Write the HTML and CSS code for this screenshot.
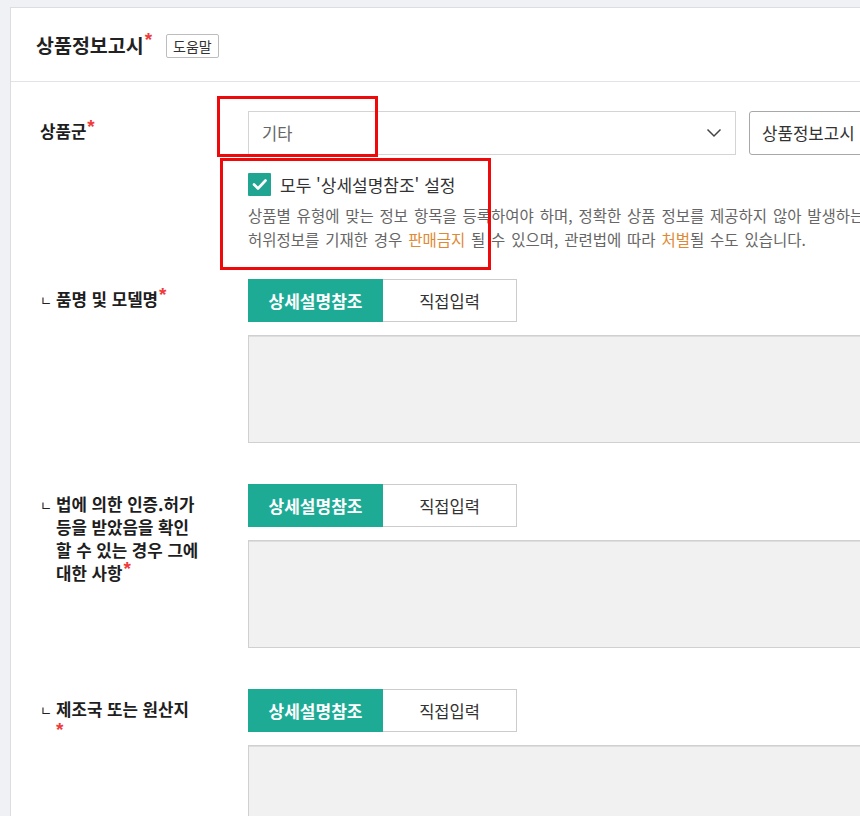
FILE: index.html
```html
<!DOCTYPE html>
<html lang="ko">
<head>
<meta charset="utf-8">
<title>상품정보고시</title>
<link rel="stylesheet" href="styles.css">
</head>
<body>
<div class="card">
  <div class="card-head">
    <h2 class="title">상품정보고시<span class="req">*</span></h2>
    <span class="help">도움말</span>
  </div>
  <div class="card-body">
    <div class="row">
      <div class="label"><span class="ltext">상품군<span class="req">*</span></span></div>
      <div class="field">
        <div class="selects">
          <div class="select">
            <span>기타</span>
            <svg class="chev" width="16" height="10" viewBox="0 0 16 10"><polyline points="1.5,1.5 8,8 14.5,1.5" fill="none" stroke="#444" stroke-width="1.5"/></svg>
          </div>
          <div class="select select2"><span>상품정보고시</span></div>
        </div>
        <div class="check-row">
          <span class="checkbox"><svg width="23" height="23" viewBox="0 0 23 23"><polyline points="6,11.5 10,15.5 17.5,7.5" fill="none" stroke="#fff" stroke-width="2.6" stroke-linecap="round" stroke-linejoin="round"/></svg></span>
          <span class="check-label">모두 '상세설명참조' 설정</span>
        </div>
        <p class="desc">상품별 유형에 맞는 정보 항목을 등록하여야 하며, 정확한 상품 정보를 제공하지 않아 발생하는 불이익에 대해서는 판매자에게 책임이 있습니다.<br>허위정보를 기재한 경우 <span class="warn">판매금지</span> 될 수 있으며, 관련법에 따라 <span class="warn">처벌</span>될 수도 있습니다.</p>
      </div>
    </div>

    <div class="row row-sub">
      <div class="label"><span class="lmark">ㄴ</span><span class="ltext">품명 및 모델명<span class="req">*</span></span></div>
      <div class="field">
        <div class="seg"><span class="btn on">상세설명참조</span><span class="btn off">직접입력</span></div>
        <div class="area"></div>
      </div>
    </div>

    <div class="row row-sub">
      <div class="label"><span class="lmark">ㄴ</span><span class="ltext">법에 의한 인증.허가<br>등을 받았음을 확인<br>할 수 있는 경우 그에<br>대한 사항<span class="req">*</span></span></div>
      <div class="field">
        <div class="seg"><span class="btn on">상세설명참조</span><span class="btn off">직접입력</span></div>
        <div class="area"></div>
      </div>
    </div>

    <div class="row row-sub">
      <div class="label"><span class="lmark">ㄴ</span><span class="ltext">제조국 또는 원산지<span class="req req-block">*</span></span></div>
      <div class="field">
        <div class="seg"><span class="btn on">상세설명참조</span><span class="btn off">직접입력</span></div>
        <div class="area"></div>
      </div>
    </div>
  </div>

  <div class="mark mark-1"></div>
  <div class="mark mark-2"></div>
</div>
</body>
</html>
```

FILE: styles.css
```css
html, body {
  margin: 0;
  padding: 0;
}
body {
  background: #f0f1f5;
  overflow: hidden;
  font-family: "Noto Sans CJK KR", "Noto Sans", sans-serif;
  color: #222;
}
.card {
  position: relative;
  margin: 7px 0 0 10px;
  width: 1000px;
  min-height: 900px;
  background: #fff;
  border: 1px solid #dcdde1;
  border-right: none;
}
.card-head {
  height: 73px;
  display: flex;
  align-items: center;
  padding-left: 25px;
  border-bottom: 1px solid #e2e3e6;
}
.title {
  margin: 0;
  font-size: 19.5px;
  font-weight: 700;
  color: #222;
  line-height: 24px;
}
.req {
  color: #ee3b3b;
  font-family: "Liberation Sans", sans-serif;
  font-weight: 700;
  font-size: 19px;
  line-height: 1;
  vertical-align: top;
  margin-left: 1px;
  position: relative;
  top: -3px;
}
.help {
  margin-left: 14px;
  margin-top: 2px;
  height: 24px;
  box-sizing: border-box;
  padding: 0 6px;
  border: 1px solid #bdbdbd;
  border-radius: 2px;
  font-size: 14px;
  line-height: 22px;
  color: #333;
}
.card-body {
  padding-top: 29px;
}
.row {
  display: grid;
  grid-template-columns: 237px 1fr;
}
.row + .row {
  margin-top: 28px;
}
.row-sub + .row-sub {
  margin-top: 41px;
}
.label {
  display: flex;
  padding: 9px 0 0 29px;
  font-size: 16.8px;
  font-weight: 700;
  line-height: 23px;
  color: #1e1e1e;
}
.lmark {
  width: 16px;
  flex: none;
  font-size: 13px;
  font-weight: 400;
  color: #222;
}
.ltext {
  display: block;
}
.req-block {
  display: block;
  top: -1px;
  height: 12px;
  margin-left: 0;
}
.selects {
  display: flex;
  gap: 13px;
}
.select {
  width: 488px;
  height: 44px;
  box-sizing: border-box;
  border: 1px solid #d4d4d4;
  display: flex;
  align-items: center;
  justify-content: space-between;
  padding: 0 13px 0 13px;
  font-size: 16.5px;
  color: #666;
}
.select2 {
  width: 220px;
  border-color: #a8a8a8;
  border-radius: 3px;
  padding-left: 12px;
  font-size: 16.8px;
  color: #333;
}
.check-row {
  display: flex;
  align-items: center;
  gap: 9px;
  margin-top: 18px;
  height: 23px;
}
.checkbox {
  width: 23px;
  height: 23px;
  background: #20a592;
  border-radius: 1px;
  display: block;
}
.checkbox svg {
  display: block;
}
.check-label {
  font-size: 17px;
  color: #333;
}
.desc {
  margin: 7px 0 0;
  font-size: 15.5px;
  word-spacing: 1.5px;
  line-height: 24px;
  color: #666;
  white-space: nowrap;
}
.warn {
  color: #de8a35;
}
.seg {
  display: flex;
}
.btn {
  height: 43px;
  box-sizing: border-box;
  display: flex;
  align-items: center;
  justify-content: center;
  font-size: 17px;
}
.btn.on {
  width: 135px;
  background: #1eab96;
  border: 1px solid #1eab96;
  color: #fff;
  font-weight: 700;
}
.btn.off {
  width: 134px;
  background: #fff;
  border: 1px solid #cccccc;
  border-left: none;
  color: #333;
  font-size: 16.5px;
}
.area {
  margin-top: 13px;
  width: 700px;
  height: 108px;
  box-sizing: border-box;
  background: #f1f1f1;
  border: 1px solid #d0d0d0;
  box-shadow: inset 0 1px 0 #dedede;
}
.mark {
  position: absolute;
  box-sizing: border-box;
  border: 3px solid #ee0a0a;
}
.mark-1 {
  left: 206px;
  top: 88px;
  width: 161px;
  height: 61px;
}
.mark-2 {
  left: 209px;
  top: 150px;
  width: 271px;
  height: 112px;
}
```
